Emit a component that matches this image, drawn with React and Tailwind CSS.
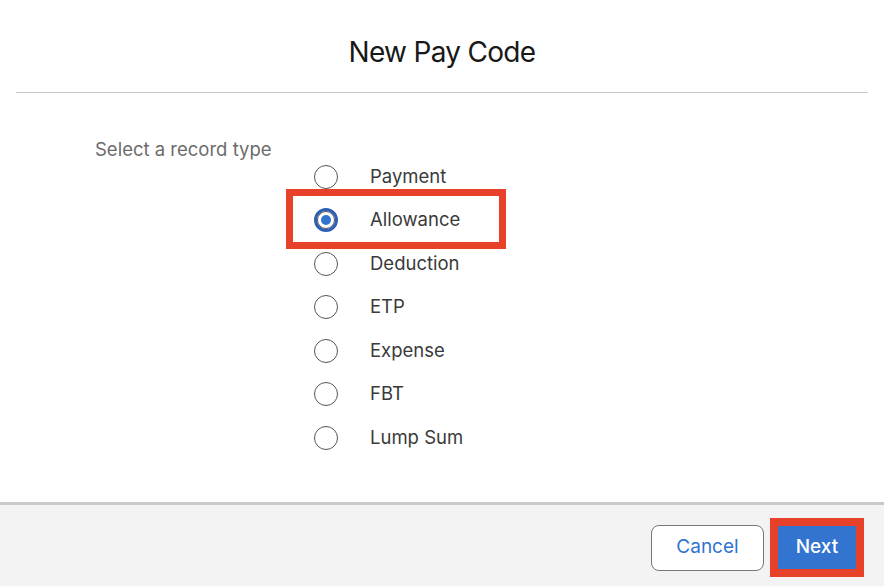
import React from "react";

const types = ["Payment", "Allowance", "Deduction", "ETP", "Expense", "FBT", "Lump Sum"];

const Radio = ({ checked }) =>
  checked ? (
    <span className="w-6 h-6 rounded-full border-[3px] border-[#2c5fb8] flex items-center justify-center">
      <span className="w-[18px] h-[18px] rounded-full border border-[#555] flex items-center justify-center">
        <span className="w-2.5 h-2.5 rounded-full bg-[#2f74d0]" />
      </span>
    </span>
  ) : (
    <span className="w-6 h-6 rounded-full border border-[#555] bg-white" />
  );

export default function App() {
  return (
    <div className="w-[884px] h-[586px] bg-white flex flex-col text-[#181818]" style={{ fontFamily: "Inter, 'Liberation Sans', sans-serif" }}>
      <div className="h-[93px] flex items-center justify-center mx-4 border-b border-[#c9c9c9] pt-[11px]">
        <h1 className="text-[28px] tracking-tight">New Pay Code</h1>
      </div>
      <div className="flex-1 flex pt-[46px] pl-[95px]">
        <div className="text-[18.5px] text-[#6b6b6b] w-[219px] leading-none pt-[1px]">Select a record type</div>
        <div className="flex flex-col pt-[16px]">
          {types.map((t, i) => (
            <div key={t} className="relative h-[43.5px] flex items-center gap-8 text-[18.5px] text-[#3a3a3a]">
              {i === 1 && (
                <div className="absolute left-[-28px] top-[-10px] w-[220px] h-[60px] border-[7px] border-[#e8412a]" />
              )}
              <Radio checked={i === 1} />
              <span>{t}</span>
            </div>
          ))}
        </div>
      </div>
      <div className="h-[84px] bg-[#f3f3f3] border-t-[3px] border-[#c9c9c9] flex items-center justify-end pr-5 gap-1.5 pt-1">
        <button className="w-[113px] h-[46px] rounded-lg border border-[#777] bg-white text-[#2f74d0] text-[19px]">Cancel</button>
        <div className="w-[94px] h-[59px] bg-[#e8412a] p-[8px] flex">
          <button className="flex-1 bg-[#3274d0] text-white text-[19px] font-medium">Next</button>
        </div>
      </div>
    </div>
  );
}
